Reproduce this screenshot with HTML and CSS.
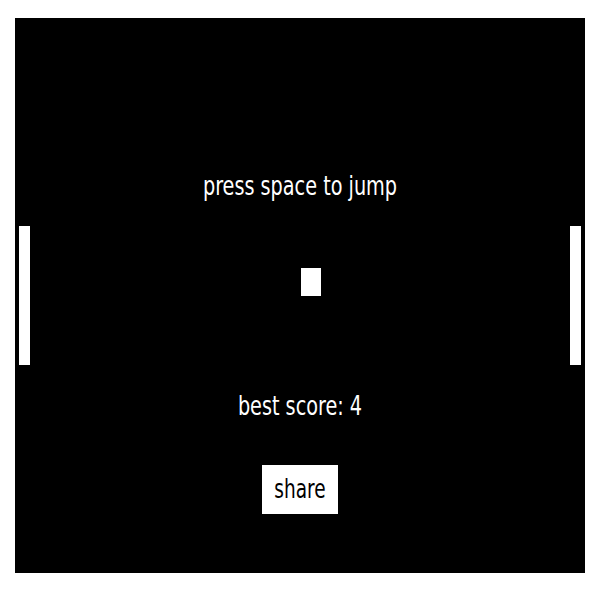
FILE: index.html
```html
<!DOCTYPE html>
<html>
<head>
<meta charset="utf-8">
<title>jump</title>
<link rel="stylesheet" href="styles.css">
</head>
<body>
<div id="game" class="stage">
    <div class="paddle paddle-left"></div>
    <div class="paddle paddle-right"></div>
    <div class="player"></div>
    <p class="hint">press space to jump</p>
    <p class="best">best score: 4</p>
    <button class="share" type="button"><span>share</span></button>
</div>
</body>
</html>
```

FILE: styles.css
```css
body {
    margin: 0px;
    background-color: white;
}
.stage {
    position: relative;
    margin: 18px 15px 0px 15px;
    width: 570px;
    height: 555px;
    background-color: black;
    color: white;
    font-family: "DejaVu Sans Condensed", "DejaVu Sans", sans-serif;
    font-stretch: condensed;
    font-size: 21.4px;
    line-height: 1;
    display: flex;
    flex-direction: column;
    align-items: center;
    padding-top: 157px;
    box-sizing: border-box;
}
/* the game text is drawn tall and narrow */
.stage p,
.share span {
    margin: 0px;
    display: inline-block;
    transform: scaleY(1.28);
}
.best {
    margin-top: 199px !important;
}
.paddle {
    position: absolute;
    top: 208px;
    width: 11px;
    height: 139px;
    background-color: white;
}
.paddle-left {
    left: 4px;
}
.paddle-right {
    right: 4px;
}
.player {
    position: absolute;
    left: 286px;
    top: 250px;
    width: 20px;
    height: 28px;
    background-color: white;
}
.share {
    margin-top: 48px;
    width: 76px;
    height: 49px;
    padding: 0px;
    border: none;
    background-color: white;
    color: black;
    font-family: inherit;
    font-stretch: condensed;
    font-size: 20.6px;
    line-height: 49px;
}
```
